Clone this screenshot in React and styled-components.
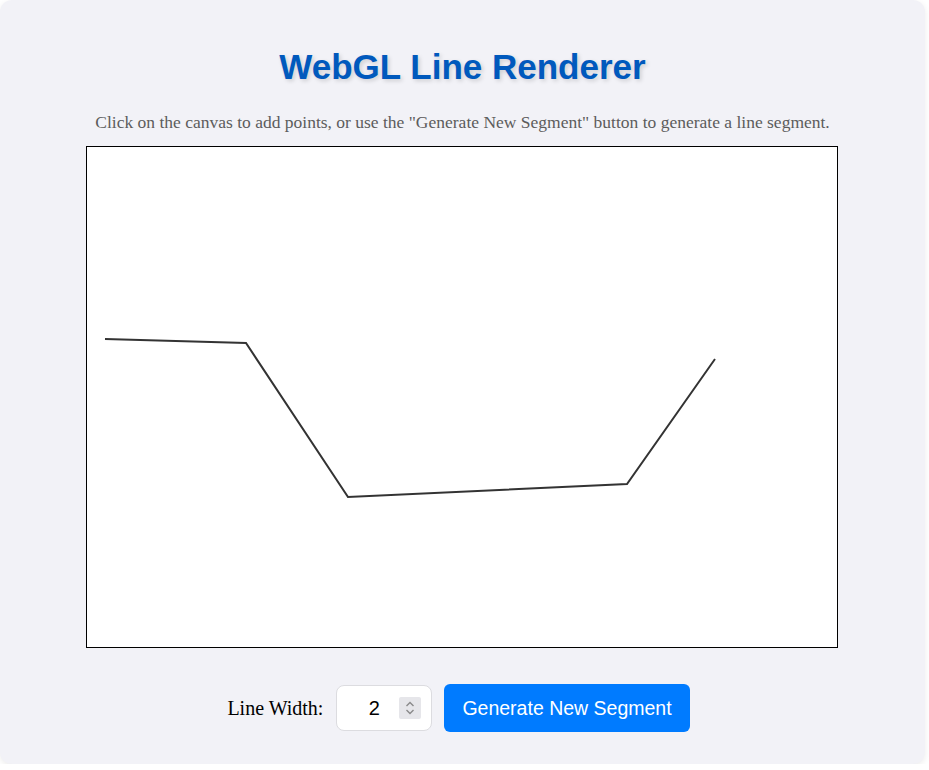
import React from 'react';
import styled, { createGlobalStyle } from 'styled-components';

// --- GLOBAL ---
const GlobalStyle = createGlobalStyle`
  html, body {
    margin: 0;
    padding: 0;
    background: #ffffff;
  }
`;

// --- STYLED COMPONENTS ---
const Card = styled.div`
  width: 925px;
  height: 764px;
  box-sizing: border-box;
  padding: 27px 0 0;
  background: #f2f2f7;
  border-radius: 12px;
  box-shadow: 0 2px 6px rgba(0, 0, 0, 0.08);
  display: flex;
  flex-direction: column;
  align-items: center;
`;

const Title = styled.h1`
  margin: 20px 0 0;
  font-family: 'Liberation Sans', Arial, sans-serif;
  font-size: 35px;
  line-height: 40px;
  font-weight: 700;
  color: #0059bd;
  text-shadow: 2px 2px 4px rgba(0, 0, 0, 0.15);
`;

const Subtitle = styled.p`
  margin: 25px 0 0;
  font-family: 'Liberation Serif', 'Times New Roman', serif;
  font-size: 17.5px;
  line-height: 20px;
  color: #5c5c5c;
`;

const CanvasFrame = styled.div`
  margin-top: 14px;
  width: 750px;
  height: 500px;
  border: 1px solid #000;
  background: #ffffff;
  margin-right: 2px;
`;

const Controls = styled.div`
  margin-top: 36px;
  display: flex;
  align-items: center;
  gap: 12px;
  margin-right: 8px;
`;

const Label = styled.label`
  font-family: 'Liberation Serif', 'Times New Roman', serif;
  font-size: 20px;
  color: #000;
  margin-right: 1px;
`;

const NumberBox = styled.div`
  width: 96px;
  height: 46px;
  box-sizing: border-box;
  border: 1px solid #dcdce0;
  border-radius: 8px;
  background: #fff;
  display: flex;
  align-items: center;
  padding: 0 10px 0 12px;
`;

const NumberInput = styled.input`
  flex: 1;
  min-width: 0;
  border: none;
  outline: none;
  background: transparent;
  text-align: center;
  font-family: 'Liberation Sans', Arial, sans-serif;
  font-size: 20px;
  color: #000;
  padding: 0;
`;

const Spinner = styled.div`
  width: 22px;
  height: 22px;
  background: #e6e6ea;
  border-radius: 2px;
  display: flex;
  align-items: center;
  justify-content: center;
`;

const GenerateButton = styled.button`
  height: 48px;
  padding: 0 18px;
  border: none;
  border-radius: 6px;
  background: #007bff;
  color: #ffffff;
  font-family: 'Liberation Sans', Arial, sans-serif;
  font-size: 19.5px;
  cursor: pointer;
`;

// --- DATA ---
const POINTS = [
  [18, 192],
  [159, 196],
  [261, 350],
  [540, 337],
  [628, 212],
];

// --- COMPONENT ---
const App = () => {
  const path = POINTS.map(([x, y]) => `${x},${y}`).join(' ');

  return (
    <>
      <GlobalStyle />
      <Card>
        <Title>WebGL Line Renderer</Title>
        <Subtitle>
          Click on the canvas to add points, or use the "Generate New Segment" button to generate a line segment.
        </Subtitle>

        <CanvasFrame>
          <svg width="750" height="500" viewBox="0 0 750 500">
            <polyline
              points={path}
              fill="none"
              stroke="#333"
              strokeWidth="2"
              strokeLinejoin="miter"
            />
          </svg>
        </CanvasFrame>

        <Controls>
          <Label htmlFor="lineWidth">Line Width:</Label>
          <NumberBox>
            <NumberInput id="lineWidth" type="text" defaultValue="2" />
            <Spinner>
              <svg width="12" height="18" viewBox="0 0 12 18">
                <path d="M2.5 7 L6 3.5 L9.5 7" fill="none" stroke="#8a8a8a" strokeWidth="1.4" />
                <path d="M2.5 11 L6 14.5 L9.5 11" fill="none" stroke="#8a8a8a" strokeWidth="1.4" />
              </svg>
            </Spinner>
          </NumberBox>
          <GenerateButton>Generate New Segment</GenerateButton>
        </Controls>
      </Card>
    </>
  );
};

export default App;
